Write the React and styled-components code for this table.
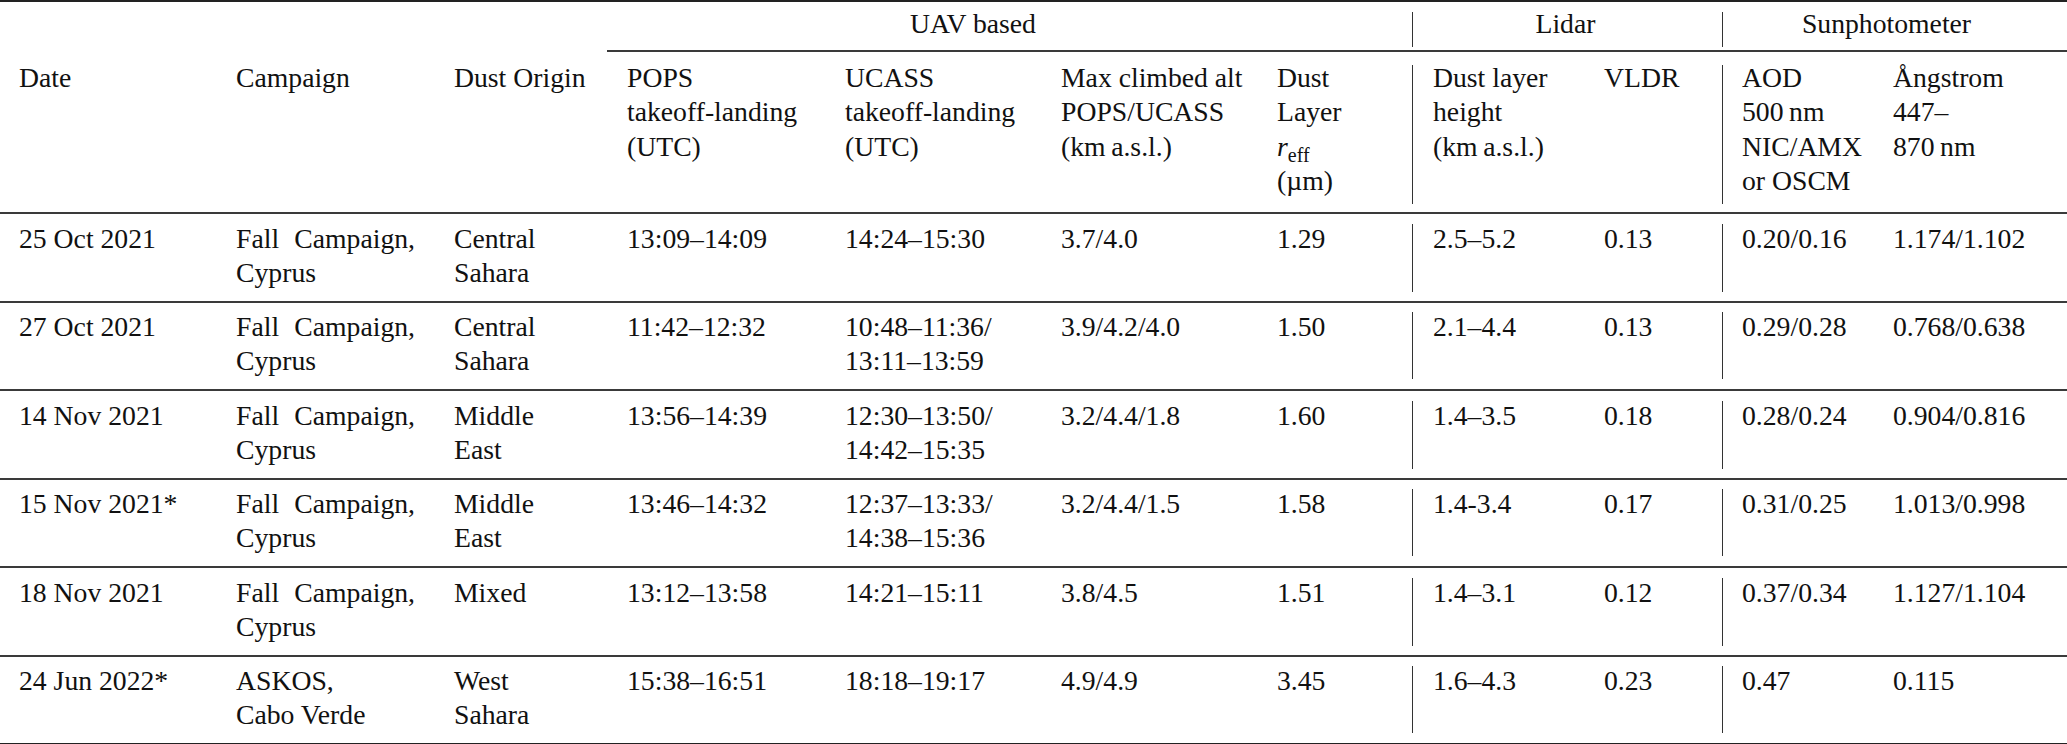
import React from "react";
import styled, { createGlobalStyle, css } from "styled-components";

const GlobalStyle = createGlobalStyle`
  html, body { margin: 0; padding: 0; background: #fff; }
  body {
    font-family: "Liberation Serif", "Times New Roman", serif;
    color: #111;
    font-size: 27.7px;
  }
`;

const COLS = "216px 218px 173px 218px 216px 216px 155px 172px 138px 151px 194px";
const RULE = "#3a3a3a";
const BAR = "#333";

const Table = styled.div`
  width: 2067px;
  border-top: 2px solid #222;
`;

const RowBase = styled.div`
  display: grid;
  grid-template-columns: ${COLS};
  box-sizing: border-box;
`;

const GroupRow = styled(RowBase)`
  height: 50px;
`;

const HeadRow = styled(RowBase)`
  height: 162px;
  border-bottom: 2px solid ${RULE};
`;

const DataRow = styled(RowBase)`
  height: 88.5px;
  border-bottom: 2px solid ${(p) => (p.$last ? "#222" : RULE)};
`;

const barStyle = css`
  background-image: linear-gradient(${BAR}, ${BAR});
  background-repeat: no-repeat;
  background-position: 0 ${(p) => p.$bar[0]}px;
  background-size: 1.3px calc(100% - ${(p) => p.$bar[0] + p.$bar[1]}px);
`;

const CellBase = styled.div`
  box-sizing: border-box;
  min-width: 0;
  padding-left: ${(p) => (p.$pl != null ? p.$pl : 20)}px;
  padding-right: ${(p) => (p.$pr != null ? p.$pr : 0)}px;
  ${(p) => p.$span && `grid-column: span ${p.$span};`}
  ${(p) => p.$bar && barStyle}
`;

const GroupCell = styled(CellBase)`
  padding-top: 8px;
  line-height: 27.7px;
  text-align: center;
  white-space: nowrap;
  ${(p) => p.$rule && `border-bottom: 2px solid ${RULE};`}
`;

const HeadCell = styled(CellBase)`
  padding-top: 9px;
  line-height: 34.4px;
  white-space: nowrap;
`;

const DataCell = styled(CellBase)`
  padding-top: 7.5px;
  line-height: 34.4px;
  white-space: ${(p) => (p.$wrap ? "normal" : "nowrap")};
  ${(p) =>
    p.$wrap &&
    css`
      text-align: justify;
    `}
`;

const Italic = styled.span`
  font-style: italic;
`;

const Sub = styled.sub`
  font-size: 0.72em;
  vertical-align: -0.28em;
  line-height: 0;
`;

const Line = ({ lines }) =>
  lines.map((l, i) => (
    <React.Fragment key={i}>
      {i > 0 && <br />}
      {l}
    </React.Fragment>
  ));

const GROUP_BAR = [9.7, 3];
const HEAD_BAR = [13, 8];
const DATA_BAR = [9.5, 9.5];

const TS = "\u2009";

const headers = [
  { lines: ["Date"], pl: 19 },
  { lines: ["Campaign"] },
  { lines: ["Dust Origin"] },
  { lines: ["POPS", "takeoff-landing", "(UTC)"] },
  { lines: ["UCASS", "takeoff-landing", "(UTC)"] },
  { lines: ["Max climbed alt", "POPS/UCASS", `(km${TS}a.s.l.)`] },
  {
    lines: [
      "Dust",
      "Layer",
      <>
        <Italic>r</Italic>
        <Sub>eff</Sub>
      </>,
      "(µm)",
    ],
  },
  { lines: ["Dust layer", "height", `(km${TS}a.s.l.)`], bar: true, pl: 21 },
  { lines: ["VLDR"] },
  { lines: ["AOD", `500${TS}nm`, "NIC/AMX", "or OSCM"], bar: true },
  { lines: ["Ångstrom", "447–", `870${TS}nm`] },
];

const rows = [
  ["25 Oct 2021", "Fall Campaign, Cyprus", ["Central", "Sahara"], ["13:09–14:09"], ["14:24–15:30"], "3.7/4.0", "1.29", "2.5–5.2", "0.13", "0.20/0.16", "1.174/1.102"],
  ["27 Oct 2021", "Fall Campaign, Cyprus", ["Central", "Sahara"], ["11:42–12:32"], ["10:48–11:36/", "13:11–13:59"], "3.9/4.2/4.0", "1.50", "2.1–4.4", "0.13", "0.29/0.28", "0.768/0.638"],
  ["14 Nov 2021", "Fall Campaign, Cyprus", ["Middle", "East"], ["13:56–14:39"], ["12:30–13:50/", "14:42–15:35"], "3.2/4.4/1.8", "1.60", "1.4–3.5", "0.18", "0.28/0.24", "0.904/0.816"],
  ["15 Nov 2021*", "Fall Campaign, Cyprus", ["Middle", "East"], ["13:46–14:32"], ["12:37–13:33/", "14:38–15:36"], "3.2/4.4/1.5", "1.58", "1.4-3.4", "0.17", "0.31/0.25", "1.013/0.998"],
  ["18 Nov 2021", "Fall Campaign, Cyprus", ["Mixed"], ["13:12–13:58"], ["14:21–15:11"], "3.8/4.5", "1.51", "1.4–3.1", "0.12", "0.37/0.34", "1.127/1.104"],
  ["24 Jun 2022*", ["ASKOS,", "Cabo Verde"], ["West", "Sahara"], ["15:38–16:51"], ["18:18–19:17"], "4.9/4.9", "3.45", "1.6–4.3", "0.23", "0.47", "0.115"],
];

function renderData(v) {
  return Array.isArray(v) ? <Line lines={v} /> : v;
}

export default function App() {
  return (
    <>
      <GlobalStyle />
      <Table>
        <GroupRow>
          <GroupCell $span={3} />
          <GroupCell $span={4} $rule $pr={93}>
            UAV based
          </GroupCell>
          <GroupCell $span={2} $rule $bar={GROUP_BAR} $pl={21} $pr={24}>
            Lidar
          </GroupCell>
          <GroupCell $span={2} $rule $bar={GROUP_BAR} $pr={36}>
            Sunphotometer
          </GroupCell>
        </GroupRow>
        <HeadRow>
          {headers.map((h, i) => (
            <HeadCell key={i} $pl={h.pl} $bar={h.bar ? HEAD_BAR : undefined}>
              <Line lines={h.lines} />
            </HeadCell>
          ))}
        </HeadRow>
        {rows.map((r, ri) => (
          <DataRow key={ri} $last={ri === rows.length - 1}>
            {r.map((v, ci) => {
              const bar = ci === 7 || ci === 9;
              const wrap = ci === 1 && !Array.isArray(v);
              return (
                <DataCell
                  key={ci}
                  $pl={ci === 0 ? 19 : ci === 7 ? 21 : 20}
                  $pr={ci === 1 ? 19 : 0}
                  $wrap={wrap}
                  $bar={bar ? DATA_BAR : undefined}
                >
                  {renderData(v)}
                </DataCell>
              );
            })}
          </DataRow>
        ))}
      </Table>
    </>
  );
}
